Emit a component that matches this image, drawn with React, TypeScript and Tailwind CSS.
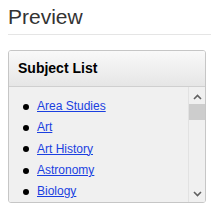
import React from "react";

const items = ["Area Studies", "Art", "Art History", "Astronomy", "Biology"];

export default function App() {
  return (
    <div className="w-[211px] h-[205px] bg-white overflow-hidden" style={{ fontFamily: '"Liberation Sans", Arial, sans-serif' }}>
      <div className="pl-[8px] pt-[5px]">
        <h1 className="text-[21px] leading-[24px] text-[#333]">Preview</h1>
        <div className="mt-[5px] h-px bg-[#e5e5e5]" />
      </div>
      <div className="ml-[8px] mt-[15px] w-[198px] h-[153px] border border-[#c6c6c6] rounded-[3px] flex flex-col overflow-hidden">
        <div className="h-[36px] shrink-0 bg-gradient-to-b from-[#f9f9f9] to-[#e6e6e6] border-b border-[#cfcfcf] flex items-center pl-[9px]">
          <span className="text-[14px] font-bold text-black">Subject List</span>
        </div>
        <div className="flex-1 flex bg-[#f0f0f0] min-h-0">
          <ul className="flex-1 overflow-hidden pt-[9px] pl-[14px] text-[12px] leading-[21.3px]">
            {items.map((t) => (
              <li key={t} className="flex items-center">
                <span className="w-[6px] h-[6px] rounded-full bg-black shrink-0" />
                <a href="#" className="ml-[8px] text-[#1a3fe0] underline">{t}</a>
              </li>
            ))}
          </ul>
          <div className="w-[17px] shrink-0 border-l border-[#e2e2e2] bg-[#f0f0f0] flex flex-col items-center">
            <svg width="9" height="6" viewBox="0 0 9 6" className="mt-[7px]">
              <path d="M1 5 L4.5 1.5 L8 5" stroke="#606060" strokeWidth="1.6" fill="none" />
            </svg>
            <div className="mt-[4px] w-[17px] h-[16px] bg-[#cdcdcd]" />
            <div className="flex-1" />
            <svg width="9" height="6" viewBox="0 0 9 6" className="mb-[5px]">
              <path d="M1 1 L4.5 4.5 L8 1" stroke="#606060" strokeWidth="1.6" fill="none" />
            </svg>
          </div>
        </div>
      </div>
    </div>
  );
}
